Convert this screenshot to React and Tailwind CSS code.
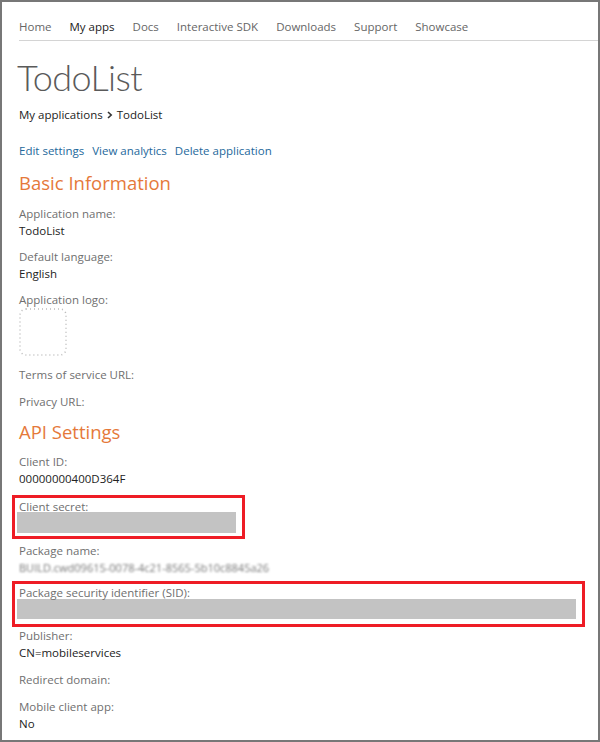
import React from 'react';

const navItems = ['Home', 'My apps', 'Docs', 'Interactive SDK', 'Downloads', 'Support', 'Showcase'];

const Label = ({ children, className = '' }) => (
    <div className={`text-[#6f6f6f] leading-[17px] ${className}`}>{children}</div>
);

const Value = ({ children }) => <div className="text-[#222] leading-[17px]">{children}</div>;

const Field = ({ label, value, className = '' }) => (
    <div className={className}>
        <Label>{label}</Label>
        {value && <Value>{value}</Value>}
    </div>
);

const SectionTitle = ({ children, className = '' }) => (
    <h2 className={`text-[18.5px] leading-[24px] text-[#e5793a] font-normal ${className}`}>{children}</h2>
);

const App = () => {
    return (
        <div
            className="w-[600px] h-[742px] border-2 border-[#777] bg-white overflow-hidden text-[11.5px]"
            style={{ fontFamily: '"Open Sans", "Noto Sans", sans-serif' }}
        >
            {/* Top navigation */}
            <nav className="ml-[17px] pt-[16px] pb-[4px] border-b border-[#d4d4d4] flex gap-[18px] text-[11.5px] leading-[18px] text-[#666]">
                {navItems.map((item) => (
                    <span key={item} className={item === 'My apps' ? 'text-[#222]' : ''}>{item}</span>
                ))}
            </nav>

            <div className="pl-[17px]">
                <h1 className="mt-[14px] -ml-[2px] text-[36px] leading-[44px] font-light text-[#5a5a5a] tracking-[-0.6px] font-['Lato',_'Open_Sans',_sans-serif]">TodoList</h1>

                <div className="mt-[7px] leading-[17px] text-[#222] flex items-center gap-[4px]">
                    <span>My applications</span>
                    <svg width="6" height="8" viewBox="0 0 6 8" className="mt-[1px]">
                        <path d="M1 1l3.2 3L1 7" fill="none" stroke="#333" strokeWidth="1.6" />
                    </svg>
                    <span>TodoList</span>
                </div>

                <div className="mt-[19px] leading-[17px] flex gap-[8px] text-[#24689b]">
                    <span>Edit settings</span>
                    <span>View analytics</span>
                    <span>Delete application</span>
                </div>

                <SectionTitle className="mt-[12px]">Basic Information</SectionTitle>

                <Field className="mt-[10px]" label="Application name:" value="TodoList" />
                <Field className="mt-[9px]" label="Default language:" value="English" />

                <div className="mt-[9px]">
                    <Label>Application logo:</Label>
                    <svg width="48" height="48" viewBox="0 0 48 48" className="block">
                        <rect x="1" y="1" width="46" height="46" rx="6" fill="none" stroke="#bdbdbd" strokeWidth="1.5" strokeDasharray="1 3" />
                    </svg>
                </div>

                <Field className="mt-[10px]" label="Terms of service URL:" />
                <Field className="mt-[10px]" label="Privacy URL:" />

                <SectionTitle className="mt-[10px]">API Settings</SectionTitle>

                <Field className="mt-[9px]" label="Client ID:" value="00000000400D364F" />

                {/* Highlighted: client secret */}
                <div className="mt-[8px] -ml-[7px] w-[233px] border-[3px] border-[#ee1c25] pl-[4px] pt-[2px] pb-[3px]">
                    <div className="text-[#6f6f6f] leading-[14px]">Client secret:</div>
                    <div className="-ml-[2px] -mt-[2px] w-[219px] h-[21px] bg-[#c3c3c3]" />
                </div>

                <div className="mt-[3px]">
                    <Label>Package name:</Label>
                    <div className="leading-[17px] text-[#777] blur-[1.2px] text-[11px]">BUILD.cwd09615-0078-4c21-8565-5b10c8845a26</div>
                </div>

                {/* Highlighted: package SID */}
                <div className="mt-[5px] -ml-[7px] w-[573px] border-[3px] border-[#ee1c25] pl-[4px] pt-[2px] pb-[5px]">
                    <div className="text-[#6f6f6f] leading-[14px]">Package security identifier (SID):</div>
                    <div className="-ml-[2px] -mt-[1px] w-[559px] h-[20px] bg-[#c3c3c3]" />
                </div>

                <Field className="mt-[0px]" label="Publisher:" value="CN=mobileservices" />
                <Field className="mt-[10px]" label="Redirect domain:" />
                <Field className="mt-[10px]" label="Mobile client app:" value="No" />
            </div>
        </div>
    );
};

export default App;
